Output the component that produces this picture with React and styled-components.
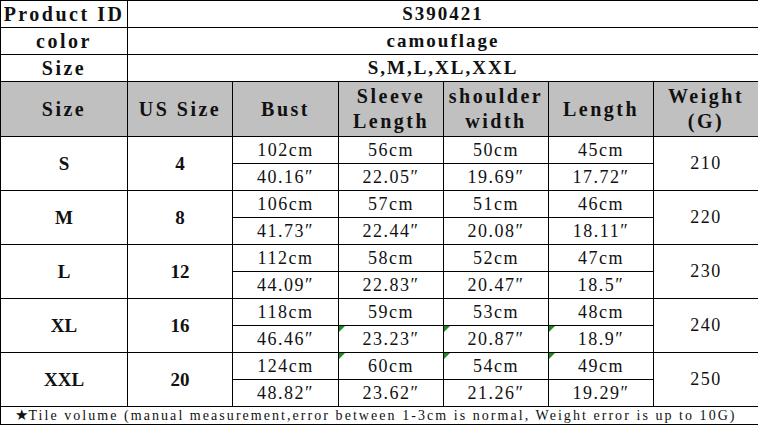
import styled, { createGlobalStyle } from "styled-components";

const GlobalStyle = createGlobalStyle`
  html, body {
    margin: 0;
    padding: 0;
    background: #ffffff;
  }
`

const info = [
  { label: "Product ID", value: "S390421" },
  { label: "color", value: "camouflage" },
  { label: "Size", value: "S,M,L,XL,XXL" },
];

const rows = [
  { size: "S", us: "4", weight: "210", cm: ["102cm", "56cm", "50cm", "45cm"], inch: ["40.16″", "22.05″", "19.69″", "17.72″"] },
  { size: "M", us: "8", weight: "220", cm: ["106cm", "57cm", "51cm", "46cm"], inch: ["41.73″", "22.44″", "20.08″", "18.11″"] },
  { size: "L", us: "12", weight: "230", cm: ["112cm", "58cm", "52cm", "47cm"], inch: ["44.09″", "22.83″", "20.47″", "18.5″"] },
  { size: "XL", us: "16", weight: "240", cm: ["118cm", "59cm", "53cm", "48cm"], inch: ["46.46″", "23.23″", "20.87″", "18.9″"], flagInch: true },
  { size: "XXL", us: "20", weight: "250", cm: ["124cm", "60cm", "54cm", "49cm"], inch: ["48.82″", "23.62″", "21.26″", "19.29″"], flagCm: true },
];

const widths = [127, 105, 106, 105, 105, 105, 105];

function App() {
  return (
    <Page>
      <GlobalStyle />
      <Chart>
        <colgroup>
          {widths.map((w, i) => <col key={i} style={{ width: w }} />)}
        </colgroup>
        <tbody>
          {info.map(item => (
            <InfoRow key={item.label}>
              <Label>{item.label}</Label>
              <Value colSpan={6}>{item.value}</Value>
            </InfoRow>
          ))}
          <HeadRow>
            <Head>Size</Head>
            <Head>US Size</Head>
            <Head>Bust</Head>
            <Head>Sleeve<br />Length</Head>
            <Head>shoulder<br />width</Head>
            <Head>Length</Head>
            <Head>Weight<br />(G)</Head>
          </HeadRow>
          {rows.map(r => [
            <DataRow key={r.size + "-cm"}>
              <SizeCell rowSpan={2}>{r.size}</SizeCell>
              <SizeCell rowSpan={2}>{r.us}</SizeCell>
              {r.cm.map((v, i) => <Cell key={i} $flag={r.flagCm && i > 0}>{v}</Cell>)}
              <Weight rowSpan={2}>{r.weight}</Weight>
            </DataRow>,
            <DataRow key={r.size + "-in"}>
              {r.inch.map((v, i) => <Cell key={i} $flag={r.flagInch && i > 0}>{v}</Cell>)}
            </DataRow>,
          ])}
          <NoteRow>
            <Note colSpan={7}>
              <Star>★</Star>Tile volume (manual measurement,error between 1-3cm is normal, Weight error is up to 10G)
            </Note>
          </NoteRow>
        </tbody>
      </Chart>
    </Page>
  )
}

const Page = styled.div`
  width: 758px;
  height: 425px;
  background: #ffffff;
  overflow: hidden;
`

const Chart = styled.table`
  width: 758px;
  table-layout: fixed;
  border-collapse: collapse;
  font-family: "Liberation Serif", "DejaVu Serif", serif;
  color: #111111;

  td {
    border: 1px solid #000000;
    padding: 0;
    text-align: center;
    vertical-align: middle;
    overflow: hidden;
    white-space: nowrap;
  }
`

const InfoRow = styled.tr`
  height: 27px;
`

const Label = styled.td`
  font-size: 20px;
  font-weight: 700;
  line-height: 26px;
  letter-spacing: 2.5px;
`

const Value = styled.td`
  font-size: 19px;
  font-weight: 700;
  line-height: 26px;
  letter-spacing: 2px;
`

const HeadRow = styled.tr`
  height: 55px;
`

const Head = styled.td`
  background: #c0c0c0;
  font-size: 20px;
  font-weight: 700;
  line-height: 25px;
  letter-spacing: 2.5px;
`

const DataRow = styled.tr`
  height: 27px;
`

const SizeCell = styled.td`
  font-size: 19px;
  font-weight: 700;
`

const Weight = styled.td`
  font-size: 18px;
  letter-spacing: 1.5px;
`

const Cell = styled.td`
  position: relative;
  font-size: 18px;
  line-height: 26px;
  letter-spacing: 1.5px;

  &::before {
    content: "";
    display: ${p => (p.$flag ? "block" : "none")};
    position: absolute;
    top: 0;
    left: 0;
    border-top: 6px solid #1f8a1f;
    border-right: 6px solid transparent;
  }
`

const NoteRow = styled.tr`
  height: 18px;
`

const Note = styled.td`
  font-size: 14px;
  line-height: 17px;
  letter-spacing: 2.05px;
  text-align: left !important;
  padding-left: 14px !important;
`

const Star = styled.span`
  font-family: "DejaVu Sans", sans-serif;
  font-size: 15px;
  letter-spacing: 0;
`

export default App;
